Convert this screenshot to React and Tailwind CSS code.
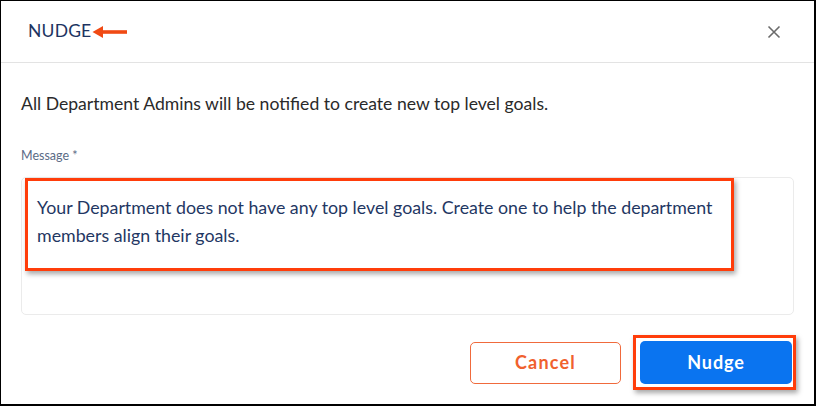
import React from "react";

export default function App() {
  return (
    <div className="w-[816px] h-[406px] bg-white border-t border-l border-r-2 border-b-2 border-black relative font-['Lato',sans-serif] overflow-hidden">
      {/* header */}
      <div className="h-[62px] flex items-center justify-between pl-[27px] pr-[33px] border-b border-[#e3e3e3]">
        <div className="flex items-center">
          <span className="text-[17.5px] text-[#1d3461] tracking-[0.2px]">NUDGE</span>
          <svg width="36" height="12" viewBox="0 0 36 12" className="ml-[1px]">
            <path d="M35 6 H9" stroke="#f04a14" strokeWidth="3.6" strokeLinecap="butt" />
            <path d="M0.5 6 L11 0 L11 12 Z" fill="#f04a14" />
          </svg>
        </div>
        <svg width="14" height="14" viewBox="0 0 14 14">
          <path d="M1.5 1.5 L12.5 12.5 M12.5 1.5 L1.5 12.5" stroke="#6b6b6b" strokeWidth="1.6" />
        </svg>
      </div>

      {/* body */}
      <div className="px-[20px] pt-[31px]">
        <p className="text-[17.6px] text-[#2a2a2a] leading-[20px]">
          All Department Admins will be notified to create new top level goals.
        </p>
        <div className="mt-[34px] text-[12.5px] text-[#5b6b86] leading-[16px]">Message *</div>
        <div className="relative mt-[13px] h-[138px] border border-[#ebebeb] rounded-[5px] px-[15px] pt-[15px]">
          <p className="text-[17.8px] text-[#1f3763] leading-[28px]">
            Your Department does not have any top level goals. Create one to help the department members align their goals.
          </p>
          <div className="absolute left-[3px] top-[0px] w-[709px] h-[93px] border-[3px] border-[#ff3d0a] shadow-[2px_3px_5px_rgba(0,0,0,0.35)]" />
        </div>
      </div>

      {/* footer */}
      <div className="flex justify-end items-center gap-[19px] pr-[22px] pt-[26px]">
        <button className="w-[151px] h-[42px] rounded-[5px] border border-[#f06a3c] text-[#f0612e] text-[18px] font-bold tracking-[1.2px] bg-white">
          Cancel
        </button>
        <div className="relative">
          <button className="w-[152px] h-[43px] rounded-[5px] bg-[#0a74f0] text-white text-[18px] font-bold tracking-[0.9px]">
            Nudge
          </button>
          <div className="absolute left-[-7px] top-[-6px] w-[163px] h-[55px] border-[3px] border-[#ff3d0a] shadow-[2px_3px_5px_rgba(0,0,0,0.35)]" />
        </div>
      </div>
    </div>
  );
}
